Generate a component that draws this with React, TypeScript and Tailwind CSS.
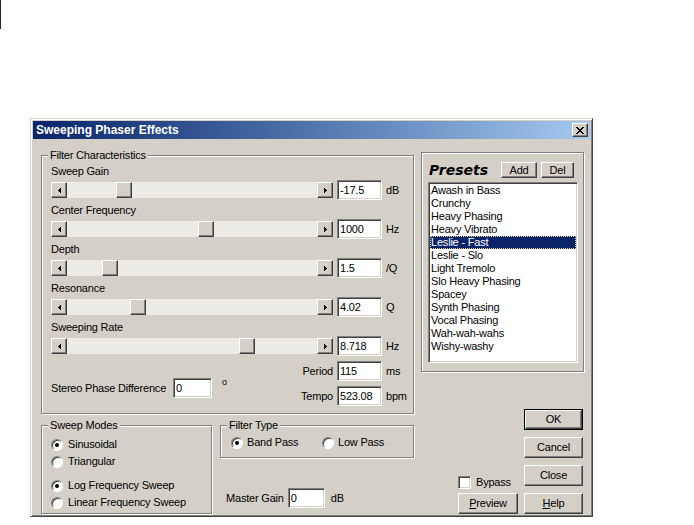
import type { ReactNode } from "react";

const raised =
  "border border-t-white border-l-white border-b-[#404040] border-r-[#404040] shadow-[inset_-1px_-1px_0_#808080] bg-[#d4d0c8]";
const sunken =
  "border border-t-[#808080] border-l-[#808080] border-b-white border-r-white shadow-[inset_1px_1px_0_#404040,inset_-1px_-1px_0_#d4d0c8] bg-white";
const etched = "border border-[#808080] shadow-[inset_1px_1px_0_#fff,1px_1px_0_#fff]";

const sliders = [
  { label: "Sweep Gain", value: "-17.5", unit: "dB", thumb: "ml-[49px]" },
  { label: "Center Frequency", value: "1000", unit: "Hz", thumb: "ml-[131px]" },
  { label: "Depth", value: "1.5", unit: "/Q", thumb: "ml-[35px]" },
  { label: "Resonance", value: "4.02", unit: "Q", thumb: "ml-[63px]" },
  { label: "Sweeping Rate", value: "8.718", unit: "Hz", thumb: "ml-[172px]" },
];

const presets = [
  "Awash in Bass",
  "Crunchy",
  "Heavy Phasing",
  "Heavy Vibrato",
  "Leslie - Fast",
  "Leslie - Slo",
  "Light Tremolo",
  "Slo Heavy Phasing",
  "Spacey",
  "Synth Phasing",
  "Vocal Phasing",
  "Wah-wah-wahs",
  "Wishy-washy",
];

function Arrow({ dir }: { dir: "left" | "right" }) {
  return (
    <div className={`${raised} flex h-[16px] w-[16px] items-center justify-center`}>
      <svg width="3" height="5" viewBox="0 0 3 5" shapeRendering="crispEdges">
        <path
          d={dir === "left" ? "M2 0h1v5h-1zM1 1h1v3h-1zM0 2h1v1h-1z" : "M0 0h1v5h-1zM1 1h1v3h-1zM2 2h1v1h-1z"}
          fill="#000"
        />
      </svg>
    </div>
  );
}

function ScrollBar({ thumb }: { thumb: string }) {
  return (
    <div className="flex h-[16px] w-[282px]">
      <Arrow dir="left" />
      <div className="flex flex-1 bg-[#ecebe6]">
        <div className={`${raised} ${thumb} h-[16px] w-[16px]`} />
      </div>
      <Arrow dir="right" />
    </div>
  );
}

function TextBox({ value, className = "" }: { value: string; className?: string }) {
  return <div className={`${sunken} ${className} flex h-[20px] items-center pl-[2px]`}>{value}</div>;
}

function Radio({ checked }: { checked?: boolean }) {
  return (
    <span className="flex h-[12px] w-[12px] items-center justify-center rounded-full border border-t-[#808080] border-l-[#808080] border-b-white border-r-white bg-white shadow-[inset_1px_1px_0_#404040]">
      {checked && <span className="h-[4px] w-[4px] rounded-full bg-black" />}
    </span>
  );
}

function Group({
  title,
  className = "",
  boxClass = "",
  children,
}: {
  title: string;
  className?: string;
  boxClass?: string;
  children: ReactNode;
}) {
  return (
    <div className={`flex flex-col ${className}`}>
      <span className="relative z-10 ml-[7px] self-start bg-[#d4d0c8] px-[2px] leading-[13px]">{title}</span>
      <div className={`${etched} -mt-[7px] ${boxClass}`}>{children}</div>
    </div>
  );
}

function Button({ children, className = "" }: { children: ReactNode; className?: string }) {
  return <div className={`${raised} ${className} flex items-center justify-center`}>{children}</div>;
}

export default function App() {
  return (
    <div className="h-[525px] w-[694px] overflow-hidden bg-white font-['Liberation_Sans',Arial,sans-serif] text-[11px] leading-[13px] tracking-[-0.2px] text-black">
      <div className="h-[29px] w-px bg-[#222]" />

      <div className="ml-[30px] mt-[89px] flex h-[399px] w-[563px] flex-col border border-t-[#d4d0c8] border-l-[#d4d0c8] border-b-[#404040] border-r-[#404040] bg-[#d4d0c8] p-[2px] shadow-[inset_1px_1px_0_#fff,inset_-1px_-1px_0_#808080]">
        {/* title bar */}
        <div className="flex h-[18px] items-center justify-between bg-linear-to-r from-[#0a246a] to-[#a6caf0] pl-[3px] pr-[2px]">
          <span className="text-[12px] font-bold tracking-normal text-white">Sweeping Phaser Effects</span>
          <Button className="h-[14px] w-[16px]">
            <svg width="8" height="7" viewBox="0 0 8 7" shapeRendering="crispEdges">
              <path d="M0 0h2v1h-2zM6 0h2v1h-2zM1 1h2v1h-2zM5 1h2v1h-2zM2 2h4v1h-4zM3 3h2v1h-2zM2 4h4v1h-4zM1 5h2v1h-2zM5 5h2v1h-2zM0 6h2v1h-2zM6 6h2v1h-2z" fill="#000" />
            </svg>
          </Button>
        </div>

        <div className="flex pl-[8px]">
          {/* left column */}
          <div className="flex w-[373px] flex-col">
            <Group title="Filter Characteristics" className="mt-[10px]" boxClass="pl-[9px] pt-[9px] pb-[7px]">
              <div className="flex flex-col gap-[4px]">
                {sliders.map((s) => (
                  <div key={s.label} className="flex flex-col">
                    <span className="h-[13px]">{s.label}</span>
                    <div className="mt-[2px] flex h-[20px] items-center">
                      <ScrollBar thumb={s.thumb} />
                      <TextBox value={s.value} className="ml-[4px] w-[45px]" />
                      <span className="ml-[4px]">{s.unit}</span>
                    </div>
                  </div>
                ))}
              </div>

              <div className="mt-[5px] flex h-[45px]">
                <div className="flex w-[282px]">
                  <div className="mb-[8px] flex items-center self-end">
                    <span>Stereo Phase Difference</span>
                    <TextBox value="0" className="ml-[7px] w-[39px]" />
                    <span className="ml-[10px] self-start text-[9px] leading-none">o</span>
                  </div>
                  <div className="ml-auto flex flex-col items-end gap-[5px]">
                    <span className="flex h-[20px] items-center">Period</span>
                    <span className="flex h-[20px] items-center">Tempo</span>
                  </div>
                </div>
                <div className="ml-[4px] flex flex-col gap-[5px]">
                  <TextBox value="115" className="w-[45px]" />
                  <TextBox value="523.08" className="w-[45px]" />
                </div>
                <div className="ml-[4px] flex flex-col gap-[5px]">
                  <span className="flex h-[20px] items-center">ms</span>
                  <span className="flex h-[20px] items-center">bpm</span>
                </div>
              </div>
            </Group>

            <div className="mt-[5px] flex">
              <Group title="Sweep Modes" className="w-[171px]" boxClass="pl-[9px] pt-[10px] pb-[2px]">
                <div className="flex h-[17px] items-center">
                  <Radio checked />
                  <span className="ml-[5px]">Sinusoidal</span>
                </div>
                <div className="flex h-[17px] items-center">
                  <Radio />
                  <span className="ml-[5px]">Triangular</span>
                </div>
                <div className="mt-[7px] flex h-[17px] items-center">
                  <Radio checked />
                  <span className="ml-[5px]">Log Frequency Sweep</span>
                </div>
                <div className="flex h-[17px] items-center">
                  <Radio />
                  <span className="ml-[5px]">Linear Frequency Sweep</span>
                </div>
              </Group>

              <div className="ml-[8px] flex w-[194px] flex-col">
                <Group title="Filter Type" boxClass="pl-[10px] pt-[8px] pb-[6px]">
                  <div className="flex h-[17px] items-center">
                    <div className="flex w-[91px] items-center">
                      <Radio checked />
                      <span className="ml-[4px]">Band Pass</span>
                    </div>
                    <Radio />
                    <span className="ml-[4px]">Low Pass</span>
                  </div>
                </Group>

                <div className="mt-[30px] flex h-[20px] items-center pl-[6px]">
                  <span>Master Gain</span>
                  <TextBox value="0" className="ml-[4px] w-[37px]" />
                  <span className="ml-[6px]">dB</span>
                </div>
              </div>
            </div>
          </div>

          {/* right column */}
          <div className="ml-[7px] flex w-[163px] flex-col">
            <div className={`${etched} mt-[13px] flex h-[220px] flex-col`}>
              <div className="flex h-[16px] items-center pl-[7px] pr-[9px] mt-[9px]">
                <span className="font-['DejaVu_Sans',sans-serif] text-[14px] font-bold italic tracking-normal">Presets</span>
                <Button className="ml-auto h-[16px] w-[36px]">Add</Button>
                <Button className="ml-[4px] h-[16px] w-[33px]">Del</Button>
              </div>
              <div className={`${sunken} ml-[6px] mt-[4px] h-[181px] w-[150px] p-[1px]`}>
                {presets.map((p) => (
                  <div
                    key={p}
                    className={
                      p === "Leslie - Fast"
                        ? "h-[13px] bg-[#0a246a] pl-[1px] text-white outline-1 outline-dotted outline-[#e6d38c] -outline-offset-1"
                        : "h-[13px] pl-[1px]"
                    }
                  >
                    {p}
                  </div>
                ))}
              </div>
            </div>

            <div className="mt-[37px] flex justify-end gap-[6px] pr-[1px]">
              <div className="flex w-[60px] flex-col justify-end">
                <div className="flex h-[13px] items-center">
                  <span className={`${sunken} h-[13px] w-[13px]`} />
                  <span className="ml-[5px]">Bypass</span>
                </div>
                <Button className="mt-[4px] h-[21px] w-[60px]">
                  <span>
                    <span className="underline">P</span>review
                  </span>
                </Button>
              </div>
              <div className="flex w-[59px] flex-col gap-[7px]">
                <div className="flex h-[21px] border border-black">
                  <Button className="flex-1">OK</Button>
                </div>
                <Button className="h-[21px]">Cancel</Button>
                <Button className="h-[21px]">Close</Button>
                <Button className="h-[21px]">
                  <span>
                    <span className="underline">H</span>elp
                  </span>
                </Button>
              </div>
            </div>
          </div>
        </div>
      </div>
    </div>
  );
}
